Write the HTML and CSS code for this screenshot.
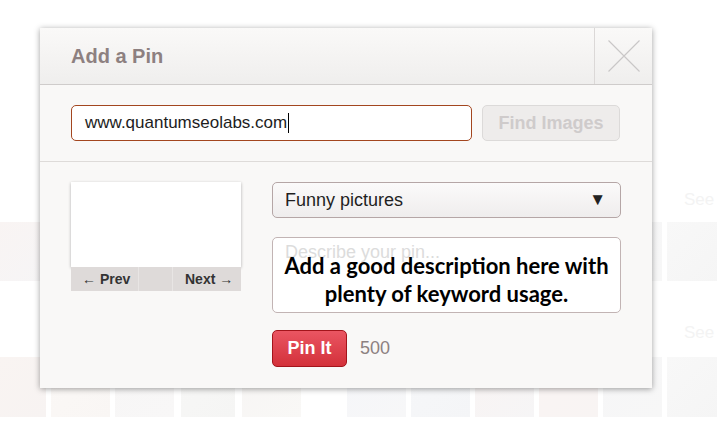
FILE: index.html
```html
<!DOCTYPE html>
<html>
<head>
<meta charset="utf-8">
<link rel="stylesheet" href="styles.css">
</head>
<body>
<div class="board">
  <section class="group group-1">
    <div class="group-head"><span class="see-all">See all</span></div>
    <div class="tiles">
      <div class="tile t1 w46"></div>
      <div class="tile t2 w60"></div>
      <div class="tile t3 w60"></div>
      <div class="tile t4 w54"></div>
      <div class="tile t5 w60"></div>
      <div class="gap-tile"></div>
      <div class="tile t6 w60"></div>
      <div class="tile t7 w60"></div>
      <div class="tile t8 w60"></div>
      <div class="tile t9 w60"></div>
      <div class="tile t10 w60"></div>
      <div class="tile t11 w53"></div>
    </div>
  </section>
  <section class="group group-2">
    <div class="group-head"><span class="see-all">See all</span></div>
    <div class="tiles">
      <div class="tile t3 w46"></div>
      <div class="tile t4 w60"></div>
      <div class="tile t8 w60"></div>
      <div class="tile t5 w54"></div>
      <div class="tile t2 w60"></div>
      <div class="gap-tile"></div>
      <div class="tile t6 w60"></div>
      <div class="tile t7 w60"></div>
      <div class="tile t1 w60"></div>
      <div class="tile t9 w60"></div>
      <div class="tile t10 w60"></div>
      <div class="tile t11 w53"></div>
    </div>
  </section>
</div>

<div class="modal">
  <div class="modal-head">
    <h2 class="title">Add a Pin</h2>
    <div class="close">
      <svg width="32" height="32" viewBox="0 0 32 32"><path d="M0.5 0.5 L31.5 31.5 M31.5 0.5 L0.5 31.5" stroke="#c9c7c7" stroke-width="1.1" fill="none"/></svg>
    </div>
  </div>
  <div class="url-row">
    <div class="url-input">www.quantumseolabs.com<span class="caret"></span></div>
    <div class="find-btn">Find Images</div>
  </div>
  <div class="pin-form">
    <div class="preview">
      <div class="img-box"></div>
      <div class="nav">
        <span class="nav-btn prev">← Prev</span>
        <span class="nav-mid"></span>
        <span class="nav-btn next">Next →</span>
      </div>
    </div>
    <div class="fields">
      <div class="select"><span>Funny pictures</span><span class="arrow">▼</span></div>
      <div class="textarea">
        <span class="placeholder">Describe your pin...</span>
        <p class="overlay">Add a good description here with plenty of keyword usage.</p>
      </div>
      <div class="actions">
        <div class="pin-btn">Pin It</div>
        <span class="count">500</span>
      </div>
    </div>
  </div>
</div>
</body>
</html>
```

FILE: styles.css
```css
* { box-sizing: border-box; }
html, body { margin: 0; padding: 0; }
body {
  width: 717px;
  height: 438px;
  overflow: hidden;
  background: #ffffff;
  font-family: "Liberation Sans", Arial, sans-serif;
  position: relative;
}

/* background board */
.board {
  display: flex;
  flex-direction: column;
  padding-top: 188px;
}
.group-head {
  height: 34px;
  display: flex;
  justify-content: flex-end;
}
.see-all {
  color: #f3f3f3;
  font-size: 17px;
  width: 33px;
  white-space: nowrap;
  padding-top: 2px;
}
.group-2 { margin-top: 40px; }
.group-2 .group-head { height: 36px; }
.tiles {
  display: flex;
  gap: 5px;
  height: 60px;
}
.group-1 .tiles { height: 59px; }
.tile { height: 100%; flex: none; }
.gap-tile { width: 36px; flex: none; }
.w46 { width: 46px; }
.w53 { width: 53px; }
.w54 { width: 54px; margin-left: 2px; margin-right: 2px; }
.w60 { width: 59px; }
.t1 { background: linear-gradient(135deg, #f9f4f3, #f6f5f6); }
.t2 { background: linear-gradient(135deg, #f7f5f4, #f9f8f6); }
.t3 { background: linear-gradient(135deg, #f9f4f2, #f7f3f2); }
.t4 { background: linear-gradient(135deg, #fbf8f6, #f9f6f4); }
.t5 { background: linear-gradient(135deg, #f7f7f6, #f5f5f4); }
.t6 { background: linear-gradient(135deg, #f5f6f9, #f7f7f8); }
.t7 { background: linear-gradient(135deg, #f6f7f9, #f4f5f7); }
.t8 { background: linear-gradient(135deg, #f7f6f6, #f8f7f7); }
.t9 { background: linear-gradient(135deg, #faf4f3, #f8f4f3); }
.t10 { background: linear-gradient(135deg, #f6f6f7, #f7f7f7); }
.t11 { background: linear-gradient(135deg, #f8f8f8, #f5f5f5); }

/* modal */
.modal {
  position: absolute;
  left: 40px;
  top: 28px;
  width: 612px;
  height: 360px;
  background: #f9f8f7;
  box-shadow: 0 1px 6px rgba(0, 0, 0, 0.38);
  display: flex;
  flex-direction: column;
}
.modal-head {
  height: 57px;
  display: flex;
  align-items: stretch;
  background: linear-gradient(#faf9f8, #efeeed);
  border-bottom: 1px solid #cfcccb;
}
.title {
  flex: 1;
  margin: 0;
  padding-left: 31px;
  display: flex;
  align-items: center;
  font-size: 20px;
  font-weight: bold;
  color: #8d8080;
}
.close {
  width: 58px;
  border-left: 1px solid #dbd8d7;
  display: flex;
  align-items: center;
  justify-content: center;
  padding-left: 1px;
}

.url-row {
  display: flex;
  gap: 10px;
  padding: 20px 32px 20px 31px;
  border-bottom: 1px solid #dedbd9;
}
.url-input {
  width: 401px;
  height: 36px;
  background: #fff;
  border: 1px solid #a3461f;
  border-radius: 5px;
  display: flex;
  align-items: center;
  padding-left: 13px;
  font-size: 17px;
  color: #1d1d1d;
}
.caret {
  display: inline-block;
  width: 1px;
  height: 20px;
  background: #000;
  margin-left: 1px;
}
.find-btn {
  width: 138px;
  height: 36px;
  border: 1px solid #dcdad9;
  border-radius: 5px;
  background: #eeeceb;
  display: flex;
  align-items: center;
  justify-content: center;
  font-size: 18px;
  font-weight: bold;
  color: #cfcbcb;
}

.pin-form {
  display: flex;
  gap: 31px;
  padding: 20px 31px 0 31px;
}
.preview { width: 170px; flex: none; }
.img-box {
  height: 85px;
  background: #fff;
  box-shadow: 0 1px 3px rgba(0, 0, 0, 0.3);
}
.nav {
  height: 24px;
  display: flex;
  background: #dedad9;
}
.nav-btn {
  display: flex;
  align-items: center;
  font-size: 14px;
  font-weight: bold;
  color: #333;
}
.prev { width: 68px; padding-left: 11px; border-right: 1px solid #e8e5e4; }
.nav-mid { width: 34px; border-right: 1px solid #e8e5e4; }
.next { flex: 1; padding-left: 12px; }

.fields {
  width: 349px;
  display: flex;
  flex-direction: column;
}
.select {
  height: 36px;
  border: 1px solid #b5a6a6;
  border-radius: 5px;
  background: linear-gradient(#fbfafa, #efeded);
  display: flex;
  align-items: center;
  justify-content: space-between;
  padding: 0 14px 0 12px;
  font-size: 18px;
  color: #1f1f1f;
}
.arrow { font-size: 17px; color: #222; }
.textarea {
  position: relative;
  margin-top: 19px;
  height: 76px;
  background: #fff;
  border: 1px solid #c2b4b4;
  border-radius: 5px;
  padding: 4px 12px;
}
.placeholder {
  font-size: 18px;
  color: #dcdcdc;
}
.overlay {
  position: absolute;
  left: 0;
  right: 0;
  top: 14px;
  margin: 0;
  text-align: center;
  font-family: Lato, "Open Sans", sans-serif;
  font-weight: bold;
  font-size: 22px;
  line-height: 28px;
  color: #000;
  padding: 0 8px;
}
.actions {
  margin-top: 17px;
  display: flex;
  align-items: center;
  gap: 13px;
}
.pin-btn {
  width: 75px;
  height: 37px;
  border: 1px solid #a3141b;
  border-radius: 5px;
  background: linear-gradient(#ea5562, #d3313a);
  display: flex;
  align-items: center;
  justify-content: center;
  color: #fff;
  font-size: 18px;
  font-weight: bold;
}
.count {
  font-size: 18px;
  color: #8d8181;
}
```
